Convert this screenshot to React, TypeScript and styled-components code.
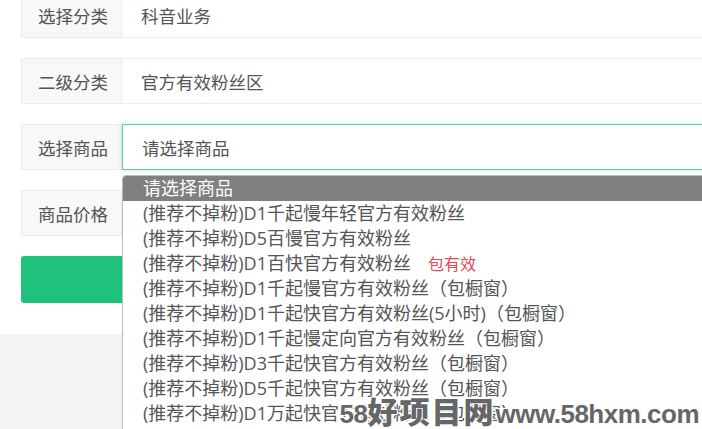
import React from "react";
import styled, { createGlobalStyle } from "styled-components";

const GlobalStyle = createGlobalStyle`
  html, body {
    margin: 0;
    padding: 0;
    background: #f2f3f5;
    overflow: hidden;
  }
  body {
    font-family: "Open Sans", "Noto Sans CJK SC", sans-serif;
  }
`;

const Page = styled.div`
  position: relative;
  width: 702px;
  height: 429px;
  overflow: hidden;
`;

const Card = styled.div`
  width: 820px;
  background: #ffffff;
  padding: 0 0 31px 21px;
`;

const Form = styled.div`
  display: flex;
  flex-direction: column;
  gap: 20px;
  margin-top: -8px;
`;

const Row = styled.div`
  display: flex;
  height: 46px;
`;

const Label = styled.div`
  box-sizing: border-box;
  width: 101px;
  flex-shrink: 0;
  display: flex;
  align-items: center;
  padding-left: 16px;
  background: #f8f8f8;
  border: 1px solid #ececec;
  color: #555555;
  font-size: 17.5px;
`;

const Field = styled.div<{ $focus?: boolean }>`
  box-sizing: border-box;
  flex: 1;
  display: flex;
  align-items: center;
  padding-left: 19px;
  background: #ffffff;
  border: 1px solid ${(p) => (p.$focus ? "#66c6b6" : "#ececec")};
  border-left: ${(p) => (p.$focus ? "1px solid #66c6b6" : "none")};
  box-shadow: ${(p) => (p.$focus ? "0 0 6px rgba(102, 198, 182, 0.35)" : "none")};
  color: #555555;
  font-size: 17.5px;
`;

const SubmitButton = styled.div`
  height: 47px;
  background: #1fc27c;
  border-radius: 3px;
`;

const Dropdown = styled.div`
  position: absolute;
  top: 175px;
  left: 122px;
  width: 620px;
  height: 280px;
  background: #ffffff;
  border: 1px solid #b9b9b9;
  border-top-left-radius: 4px;
  overflow: hidden;
`;

const Option = styled.div<{ $active?: boolean }>`
  height: 25px;
  line-height: 25px;
  padding-left: 20px;
  font-size: 18px;
  white-space: nowrap;
  color: ${(p) => (p.$active ? "#ffffff" : "#555555")};
  background: ${(p) => (p.$active ? "#808080" : "transparent")};
`;

const Tag = styled.span`
  margin-left: 17px;
  font-size: 16px;
  color: #dd4b57;
`;

const Watermark = styled.div`
  position: absolute;
  right: 3px;
  bottom: 2px;
  display: flex;
  align-items: baseline;
  font-weight: bold;
  color: #666666;
  line-height: 1;
  text-shadow: -1px -1px 0 #fff, 1px -1px 0 #fff, -1px 1px 0 #fff, 1px 1px 0 #fff,
    0 0 2px #fff;
`;

const MarkLatin = styled.span`
  font-family: "Liberation Sans", sans-serif;
  font-size: 26px;
  letter-spacing: -0.5px;
`;

const MarkCjk = styled.span`
  font-family: "Noto Sans CJK SC", sans-serif;
  font-size: 30px;
  font-weight: 900;
  letter-spacing: 2px;
`;

const options = [
  { text: "(推荐不掉粉)D1千起慢年轻官方有效粉丝" },
  { text: "(推荐不掉粉)D5百慢官方有效粉丝" },
  { text: "(推荐不掉粉)D1百快官方有效粉丝", tag: "包有效" },
  { text: "(推荐不掉粉)D1千起慢官方有效粉丝（包橱窗）" },
  { text: "(推荐不掉粉)D1千起快官方有效粉丝(5小时)（包橱窗）" },
  { text: "(推荐不掉粉)D1千起慢定向官方有效粉丝（包橱窗）" },
  { text: "(推荐不掉粉)D3千起快官方有效粉丝（包橱窗）" },
  { text: "(推荐不掉粉)D5千起快官方有效粉丝（包橱窗）" },
  { text: "(推荐不掉粉)D1万起快官方有效粉丝（包橱窗）" },
  { text: "(推荐不掉粉)D1万起慢官方有效粉丝（包橱窗）" },
];

export default function App() {
  return (
    <Page>
      <GlobalStyle />
      <Card>
        <Form>
          <Row>
            <Label>选择分类</Label>
            <Field>科音业务</Field>
          </Row>
          <Row>
            <Label>二级分类</Label>
            <Field>官方有效粉丝区</Field>
          </Row>
          <Row>
            <Label>选择商品</Label>
            <Field $focus>请选择商品</Field>
          </Row>
          <Row>
            <Label>商品价格</Label>
            <Field />
          </Row>
          <SubmitButton />
        </Form>
      </Card>
      <Dropdown>
        <Option $active>请选择商品</Option>
        {options.map((o) => (
          <Option key={o.text}>
            {o.text}
            {o.tag && <Tag>{o.tag}</Tag>}
          </Option>
        ))}
      </Dropdown>
      <Watermark>
        <MarkLatin>58</MarkLatin>
        <MarkCjk>好项目网</MarkCjk>
        <MarkLatin>www.58hxm.com</MarkLatin>
      </Watermark>
    </Page>
  );
}
